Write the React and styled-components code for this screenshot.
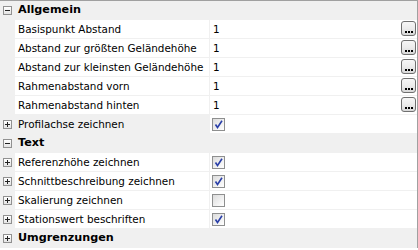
import styled, { createGlobalStyle } from "styled-components";

const GlobalStyle = createGlobalStyle`
    html, body {
        margin: 0;
        padding: 0;
        background: #ffffff;
    }
    body {
        font-family: Tahoma, "DejaVu Sans", "Liberation Sans", sans-serif;
        font-size: 10.4px;
        color: #000000;
    }
`;

const sections = [
    {
        title: "Allgemein",
        open: true,
        items: [
            { label: "Basispunkt Abstand", value: "1", button: true },
            { label: "Abstand zur größten Geländehöhe", value: "1", button: true },
            { label: "Abstand zur kleinsten Geländehöhe", value: "1", button: true },
            { label: "Rahmenabstand vorn", value: "1", button: true },
            { label: "Rahmenabstand hinten", value: "1", button: true },
            { label: "Profilachse zeichnen", check: true, expandable: true, grey: true },
        ],
    },
    {
        title: "Text",
        open: true,
        items: [
            { label: "Referenzhöhe zeichnen", check: true, expandable: true },
            { label: "Schnittbeschreibung zeichnen", check: true, expandable: true },
            { label: "Skalierung zeichnen", check: false, expandable: true },
            { label: "Stationswert beschriften", check: true, expandable: true },
        ],
    },
    { title: "Umgrenzungen", open: false, items: [] },
];

function Expander({ open }) {
    return (
        <ExpandBox>
            <svg width="9" height="9" viewBox="0 0 9 9">
                <line x1="2" y1="4.5" x2="7" y2="4.5" stroke="#222" strokeWidth="1" />
                {!open && <line x1="4.5" y1="2" x2="4.5" y2="7" stroke="#222" strokeWidth="1" />}
            </svg>
        </ExpandBox>
    );
}

function PropertyRow({ item }) {
    return (
        <Row>
            <Gutter>
                {item.expandable && <Expander open={false} />}
            </Gutter>
            <Label $grey={item.grey}>{item.label}</Label>
            <Value>
                {item.check !== undefined ? (
                    <Checkbox>
                        {item.check && (
                            <svg width="11" height="11" viewBox="0 0 11 11">
                                <path d="M2.5 5.5 L4.5 8.5 L9 1.8" fill="none" stroke="#2a3fa8" strokeWidth="1.6" />
                            </svg>
                        )}
                    </Checkbox>
                ) : (
                    <ValueText>{item.value}</ValueText>
                )}
                {item.button && (
                    <EllipsisButton>
                        <Dot /><Dot /><Dot />
                    </EllipsisButton>
                )}
            </Value>
        </Row>
    );
}

export default function App() {
    return (
        <>
            <GlobalStyle />
            <Grid>
                {sections.map((section) => (
                    <div key={section.title}>
                        <CategoryRow>
                            <Gutter>
                                <Expander open={section.open} />
                            </Gutter>
                            <CategoryTitle>{section.title}</CategoryTitle>
                        </CategoryRow>
                        {section.items.map((item) => (
                            <PropertyRow key={item.label} item={item} />
                        ))}
                    </div>
                ))}
            </Grid>
        </>
    );
}

const Grid = styled.div`
    width: 417px;
    border-top: 1px solid #a0a0a0;
    border-right: 1px solid #a0a0a0;
    background: #ffffff;
`;

const CategoryRow = styled.div`
    display: flex;
    align-items: center;
    height: 18px;
    border-bottom: 1px solid #f0f0f0;
    background: #f0f0f0;
`;

const CategoryTitle = styled.div`
    padding-left: 3px;
    font-weight: bold;
    font-size: 11.2px;
    line-height: 18px;
`;

const Row = styled.div`
    display: flex;
    height: 18px;
    border-bottom: 1px solid #f0f0f0;
`;

const Gutter = styled.div`
    width: 15px;
    height: 18px;
    flex: none;
    background: #f0f0f0;
    display: flex;
    align-items: center;
    padding-left: 3px;
    box-sizing: border-box;
`;

const ExpandBox = styled.div`
    width: 9px;
    height: 9px;
    box-sizing: border-box;
    border: 1px solid #919191;
    background: linear-gradient(#ffffff, #e4e4e4);
    display: flex;
    align-items: center;
    justify-content: center;

    svg {
        margin: -1px;
    }
`;

const Label = styled.div`
    width: 195px;
    flex: none;
    padding-left: 3px;
    box-sizing: border-box;
    border-right: 1px solid #f0f0f0;
    line-height: 18px;
    white-space: nowrap;
    overflow: hidden;
    background: ${(p) => (p.$grey ? "#f0f0f0" : "#ffffff")};
`;

const Value = styled.div`
    flex: 1;
    display: flex;
    align-items: flex-start;
    padding-left: 2px;
    padding-right: 1px;
`;

const ValueText = styled.span`
    flex: 1;
    padding-left: 1px;
    line-height: 18px;
`;

const Checkbox = styled.div`
    margin-top: 3px;
    width: 13px;
    height: 13px;
    box-sizing: border-box;
    border: 1px solid #8e8f8f;
    background: linear-gradient(135deg, #dcdcdc, #ffffff);
    display: flex;
    align-items: center;
    justify-content: center;
`;

const EllipsisButton = styled.div`
    margin-top: 1px;
    width: 15px;
    height: 15px;
    box-sizing: border-box;
    border: 1px solid #707070;
    border-radius: 3px;
    background: linear-gradient(#f6f6f6 0%, #ececec 50%, #d8d8d8 100%);
    display: flex;
    align-items: flex-end;
    justify-content: center;
    gap: 1px;
    padding-bottom: 2px;
`;

const Dot = styled.span`
    width: 2px;
    height: 2px;
    background: #000000;
`;
